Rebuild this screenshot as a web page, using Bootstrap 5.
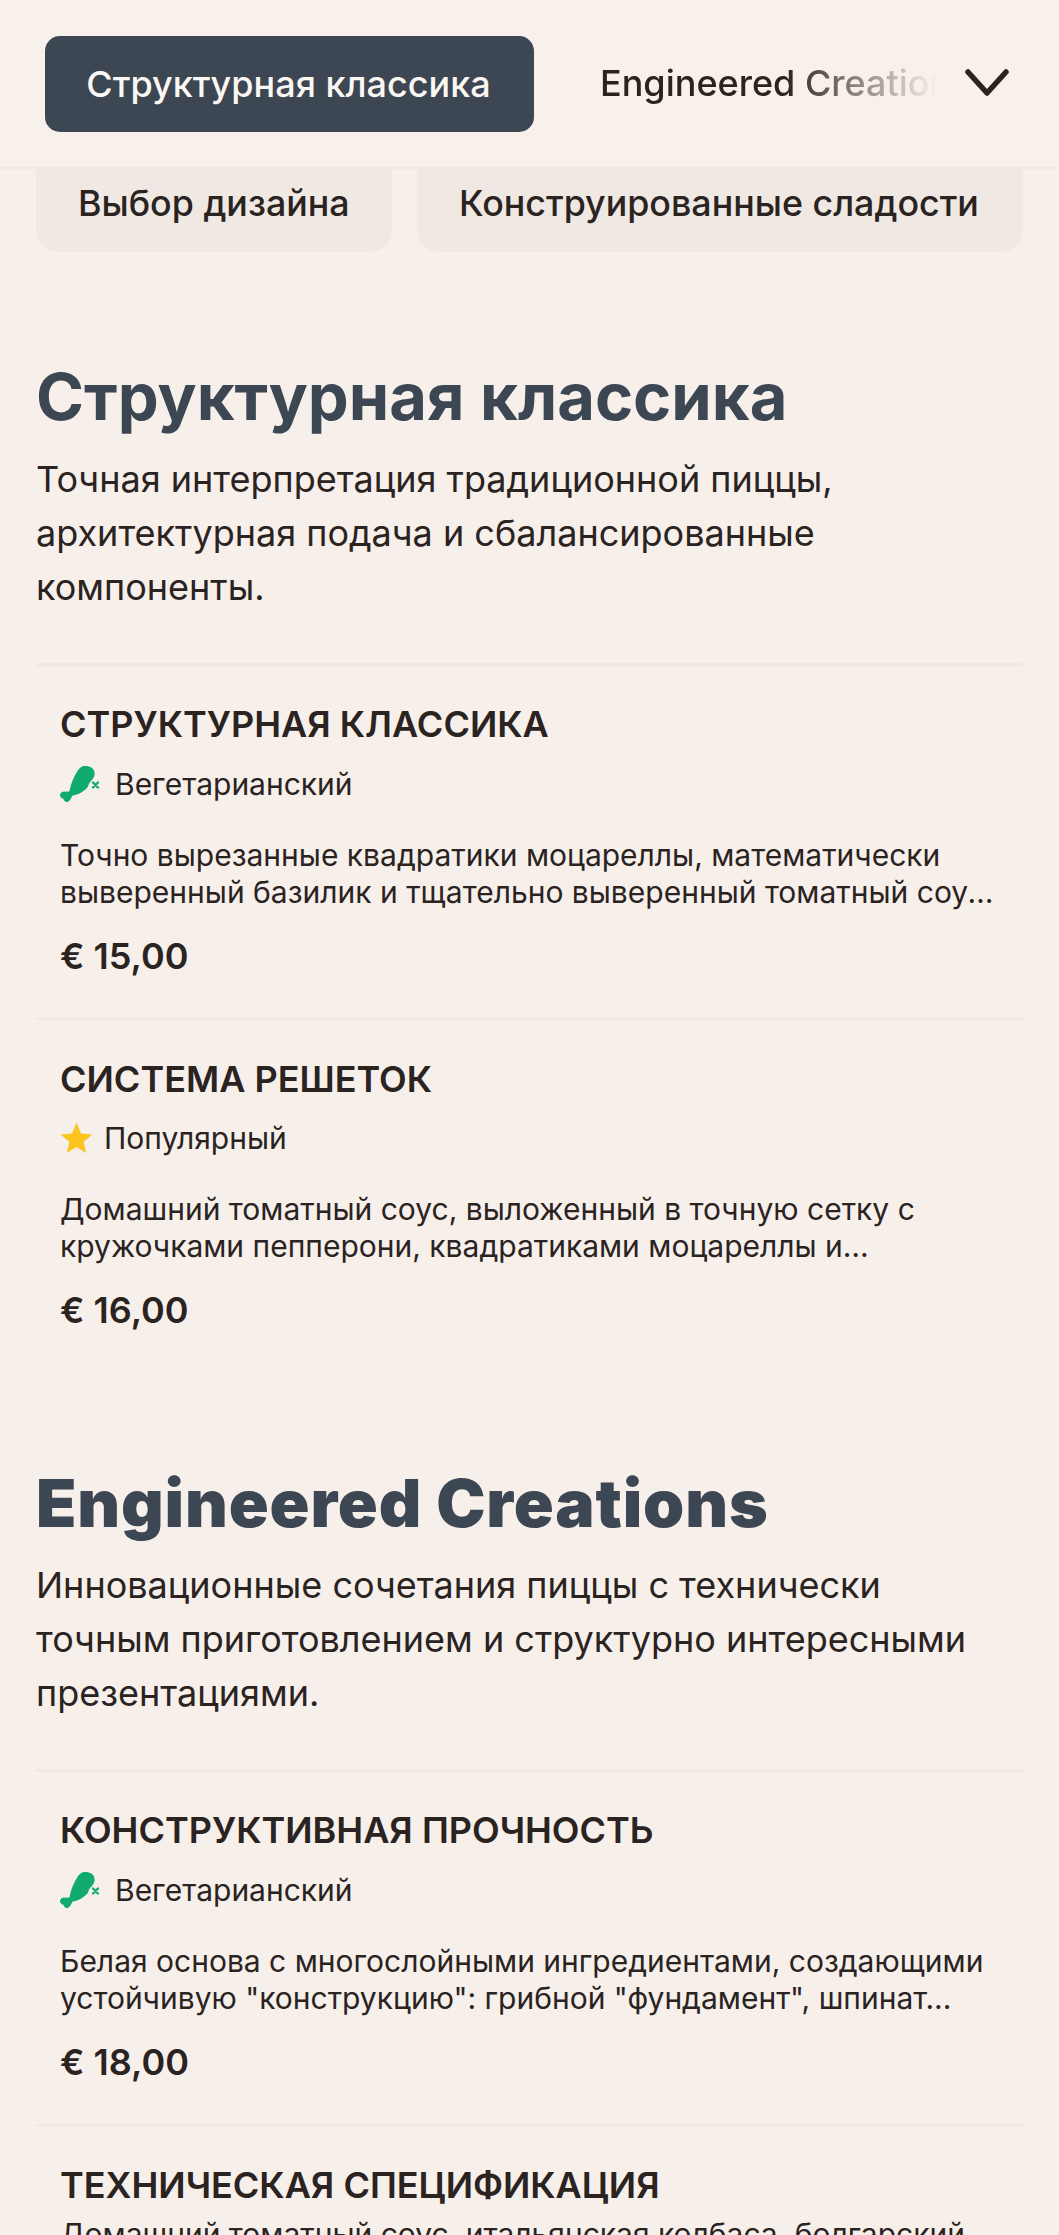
<!DOCTYPE html>
<html lang="ru"><head><meta charset="utf-8"><title>Меню</title>
<link rel="stylesheet" href="https://cdn.jsdelivr.net/npm/bootstrap@5.3.0/dist/css/bootstrap.min.css">
<style>
html,body{height:2235px;overflow:hidden;}
body{background:#f6efea;color:#2a231f;font-family:Inter,"Liberation Sans",sans-serif;font-size:36px;}
.topbar{height:169px;padding:36px 0 0 45px;background:#f8f1eb;border-bottom:2px solid #f0eae5;}
.nav-active{height:96px;width:489px;background:#3d4753;color:#fbf7f3;border-radius:15px;font-size:36px;font-weight:500;line-height:92px;border:0;padding:0 2px 0 0;flex:none;}
.nav-active:hover{background:#3d4753;color:#fbf7f3;}
.nav-next{margin-left:66px;width:337px;flex:none;white-space:nowrap;overflow:hidden;font-weight:500;line-height:94px;-webkit-mask-image:linear-gradient(90deg,#000 55%,transparent 100%);mask-image:linear-gradient(90deg,#000 55%,transparent 100%);}
.nav-chev{margin-left:28px;width:44px;height:96px;flex:none;}
.chips{padding:0 36px;gap:25px;}
.chip{height:83px;background:#efe8e3;border-radius:0 0 22px 22px;line-height:68px;font-size:35.8px;font-weight:500;padding:0 42px;white-space:nowrap;}
.chip-a{width:356px;}
.chip-b{width:606px;}
.section-wrap{padding:0 36px;}
.sec-title{font-size:65px;font-weight:700;color:#3d4753;line-height:74px;margin:0;}
.sec-latin{font-size:66px;font-weight:900;letter-spacing:.85px;}
.sec-desc{font-size:36px;line-height:54px;margin:18px 0 0;}
.s1{padding-top:108px;}
.s2{padding-top:94px;}
.items{margin-top:49px;border-top:3px solid #efe8e3;}
.item{padding:36px 24px 40px;border-bottom:2px solid #efe8e3;}
.item + .item{padding-top:37px;}
.item:last-child{border-bottom:0;}
.item-title{font-size:36px;font-weight:600;line-height:44px;margin:0;text-transform:uppercase;}
.tag{font-size:30px;line-height:38px;margin-top:19px;}
.item + .item .tag{margin-top:18px;}
.item-desc{font-size:30px;line-height:36.5px;margin:34px 0 0;display:-webkit-box;-webkit-box-orient:vertical;-webkit-line-clamp:2;overflow:hidden;}
.tech-desc{margin-top:9px;}
.price{font-size:36px;font-weight:600;line-height:44px;margin-top:24px;}
.ico-leg{width:41px;height:37px;flex:none;margin-right:14px;}
.ico-star{width:33px;height:33px;flex:none;margin-right:11px;}
</style></head><body>
<nav class="topbar d-flex align-items-start">
  <button class="btn nav-active" type="button">Структурная классика</button>
  <div class="nav-next">Engineered Creations</div>
  <svg class="nav-chev" viewBox="0 0 44 96"><path d="M3 36 L22 57 L41 36" fill="none" stroke="#2a231f" stroke-width="5.5" stroke-linecap="round" stroke-linejoin="round"/></svg>
</nav>
<div class="chips d-flex">
  <div class="chip chip-a">Выбор дизайна</div>
  <div class="chip chip-b">Конструированные сладости</div>
</div>
<main class="section-wrap">
  <section class="s1">
    <h2 class="sec-title">Структурная классика</h2>
    <p class="sec-desc">Точная интерпретация традиционной пиццы, архитектурная подача и сбалансированные компоненты.</p>
    <div class="items">
      <article class="item">
        <h3 class="item-title">Структурная классика</h3>
        <div class="tag d-flex align-items-center">
          <svg class="ico-leg" viewBox="10 10 41 37"><path fill="#12ab6f" stroke="#12ab6f" stroke-width="1.4" stroke-linejoin="round" d="M20 36C21 30 25 20 29 14C32 10 35 10 38 11C42 12 44 15 44 18C44 20 43 22 41 24C39 25 38 28 37 31C34 34 30 37 26 38L22 39C21 41 20 44 18 45C16 46 14 44 14 42C12 42 10 40 11 38C12 36 14 36 16 36.5Z"/><path d="M43 26.5l5 5M48 26.5l-5 5" stroke="#f6efea" stroke-width="5"/><path d="M43 26.5l5 5M48 26.5l-5 5" stroke="#12ab6f" stroke-width="2.4" stroke-linecap="round"/></svg>
          <span>Вегетарианский</span>
        </div>
        <p class="item-desc">Точно вырезанные квадратики моцареллы, математически выверенный базилик и тщательно выверенный томатный соус на хрустящей основе.</p>
        <div class="price">€ 15,00</div>
      </article>
      <article class="item">
        <h3 class="item-title">Система решеток</h3>
        <div class="tag d-flex align-items-center">
          <svg class="ico-star" viewBox="0 0 24 24"><path fill="#fbc41f" d="M12 .6l3.3 7.7 8.2.7-6.3 5.4 1.9 8.1L12 18.2l-7.1 4.3 1.9-8.1L.5 9l8.2-.7z"/></svg>
          <span>Популярный</span>
        </div>
        <p class="item-desc">Домашний томатный соус, выложенный в точную сетку с кружочками пепперони, квадратиками моцареллы и базиликом на тонком хрустящем тесте для пиццы.</p>
        <div class="price">€ 16,00</div>
      </article>
    </div>
  </section>
  <section class="s2">
    <h2 class="sec-title sec-latin">Engineered Creations</h2>
    <p class="sec-desc">Инновационные сочетания пиццы с технически точным приготовлением и структурно интересными презентациями.</p>
    <div class="items">
      <article class="item">
        <h3 class="item-title">Конструктивная прочность</h3>
        <div class="tag d-flex align-items-center">
          <svg class="ico-leg" viewBox="10 10 41 37"><path fill="#12ab6f" stroke="#12ab6f" stroke-width="1.4" stroke-linejoin="round" d="M20 36C21 30 25 20 29 14C32 10 35 10 38 11C42 12 44 15 44 18C44 20 43 22 41 24C39 25 38 28 37 31C34 34 30 37 26 38L22 39C21 41 20 44 18 45C16 46 14 44 14 42C12 42 10 40 11 38C12 36 14 36 16 36.5Z"/><path d="M43 26.5l5 5M48 26.5l-5 5" stroke="#f6efea" stroke-width="5"/><path d="M43 26.5l5 5M48 26.5l-5 5" stroke="#12ab6f" stroke-width="2.4" stroke-linecap="round"/></svg>
          <span>Вегетарианский</span>
        </div>
        <p class="item-desc">Белая основа с многослойными ингредиентами, создающими устойчивую "конструкцию": грибной "фундамент", шпинат...</p>
        <div class="price">€ 18,00</div>
      </article>
      <article class="item">
        <h3 class="item-title">Техническая спецификация</h3>
        <p class="item-desc tech-desc">Домашний томатный соус, итальянская колбаса, болгарский перец и лук.</p>
      </article>
    </div>
  </section>
</main>
<script src="https://cdn.jsdelivr.net/npm/bootstrap@5.3.0/dist/js/bootstrap.bundle.min.js"></script>
</body></html>
